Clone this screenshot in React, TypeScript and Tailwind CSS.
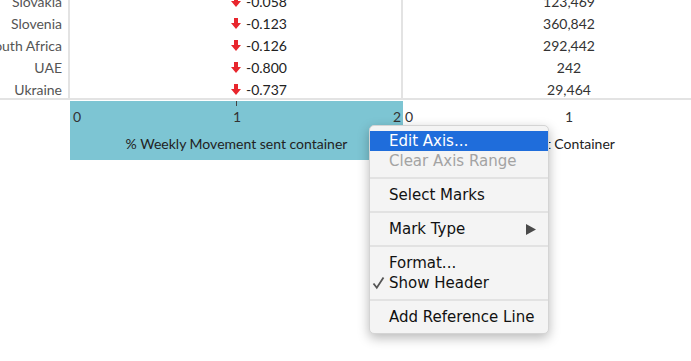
import React from "react";

const rows = [
  { c: "Slovakia", v: "-0.058", n: "123,469" },
  { c: "Slovenia", v: "-0.123", n: "360,842" },
  { c: "South Africa", v: "-0.126", n: "292,442" },
  { c: "UAE", v: "-0.800", n: "242" },
  { c: "Ukraine", v: "-0.737", n: "29,464" },
];

function DownArrow() {
  return (
    <svg width="10" height="11" viewBox="0 0 10 11" className="shrink-0">
      <path d="M3 0 H7 V5 H10 L5 11 L0 5 H3 Z" fill="#e8262d" />
    </svg>
  );
}

function Item({
  children,
  active,
  disabled,
  check,
  sub,
}: {
  children: React.ReactNode;
  active?: boolean;
  disabled?: boolean;
  check?: boolean;
  sub?: boolean;
}) {
  return (
    <div
      className={`h-[20px] flex items-center pr-[12px] ${
        active ? "bg-[#1f6ddb] text-white" : disabled ? "text-[#a3a3a3]" : "text-[#111]"
      }`}
    >
      <span className="w-[19px] flex justify-start pl-[2px]">
        {check && (
          <svg width="14" height="14" viewBox="0 0 14 14">
            <path d="M1.5 7.5 L4.8 11.8 L11.5 1.5" fill="none" stroke="#555" strokeWidth="1.8" />
          </svg>
        )}
      </span>
      <span className="flex-1">{children}</span>
      {sub && (
        <svg width="10" height="11" viewBox="0 0 10 11">
          <path d="M0 0 L10 5.5 L0 11 Z" fill="#4a4a4a" />
        </svg>
      )}
    </div>
  );
}

function Sep() {
  return (
    <div className="h-[14px] flex items-center">
      <div className="h-[2px] w-full bg-[#e2e2e2]" />
    </div>
  );
}

export default function App() {
  return (
    <div
      className="relative w-[691px] h-[361px] bg-white overflow-hidden"
      style={{ fontFamily: "Lato, 'Open Sans', sans-serif" }}
    >
      {/* table */}
      <div className="h-[100px] overflow-hidden border-b-2 border-[#e3e3e3] flex">
        <div className="w-[70px] shrink-0 border-r-2 border-[#e3e3e3] mt-[-10px]">
          {rows.map((r) => (
            <div key={r.c} className="h-[22px] flex items-center justify-end pr-[6px] text-[14px] text-[#555] whitespace-nowrap">
              {r.c}
            </div>
          ))}
        </div>
        <div className="w-[333px] shrink-0 border-r-2 border-[#e3e3e3] mt-[-10px] grid grid-cols-[165px_1px_1fr]">
          <div />
          <div className="bg-[#ececec]" />
          <div />
          <div className="col-span-3 row-start-1 col-start-1">
            {rows.map((r) => (
              <div key={r.c} className="h-[22px] flex items-center pl-[161px] gap-[5px] text-[14px] text-[#222]">
                <DownArrow />
                <span>{r.v}</span>
              </div>
            ))}
          </div>
        </div>
        <div className="w-[332px] shrink-0 mt-[-10px] grid grid-cols-[166px_1px_1fr]">
          <div />
          <div className="bg-[#ececec]" />
          <div />
          <div className="col-span-3 row-start-1 col-start-1">
            {rows.map((r) => (
              <div key={r.c} className="h-[22px] flex items-center justify-center text-[14px] text-[#333]">
                {r.n}
              </div>
            ))}
          </div>
        </div>
      </div>

      {/* axis area */}
      <div className="flex mt-px">
        <div className="w-[70px] shrink-0" />
        <div className="w-[333px] shrink-0 h-[59px] bg-[#7dc5d3] text-[#333] flex flex-col items-stretch">
          <div className="flex justify-center">
            <div className="w-px h-[5px] bg-[#444]" />
          </div>
          <div className="flex justify-between px-[3px] pr-[2px] text-[14px] leading-[20px] mt-[1px]">
            <span>0</span>
            <span>1</span>
            <span>2</span>
          </div>
          <div className="text-center text-[14px] text-[#222] mt-[6px]">% Weekly Movement sent container</div>
        </div>
        <div className="w-[332px] shrink-0 h-[59px] text-[#333] flex flex-col">
          <div className="h-[5px]" />
          <div className="flex justify-between px-[2px] text-[14px] leading-[20px] mt-[1px]">
            <span>0</span>
            <span>1</span>
            <span>2</span>
          </div>
          <div className="text-center text-[14px] text-[#222] mt-[6px]">Sent Container</div>
        </div>
      </div>

      {/* context menu */}
      <div
        className="absolute left-[369px] top-[125px] w-[180px] pt-[5px] pb-[6px] rounded-[5px] bg-[#f4f4f4] border border-[#d4d4d4] shadow-[0_4px_12px_rgba(0,0,0,0.28)] text-[15px]"
        style={{ fontFamily: "'DejaVu Sans', sans-serif" }}
      >
        <Item active>Edit Axis...</Item>
        <Item disabled>Clear Axis Range</Item>
        <Sep />
        <Item>Select Marks</Item>
        <Sep />
        <Item sub>Mark Type</Item>
        <Sep />
        <Item>Format...</Item>
        <Item check>Show Header</Item>
        <Sep />
        <Item>Add Reference Line</Item>
      </div>
    </div>
  );
}
